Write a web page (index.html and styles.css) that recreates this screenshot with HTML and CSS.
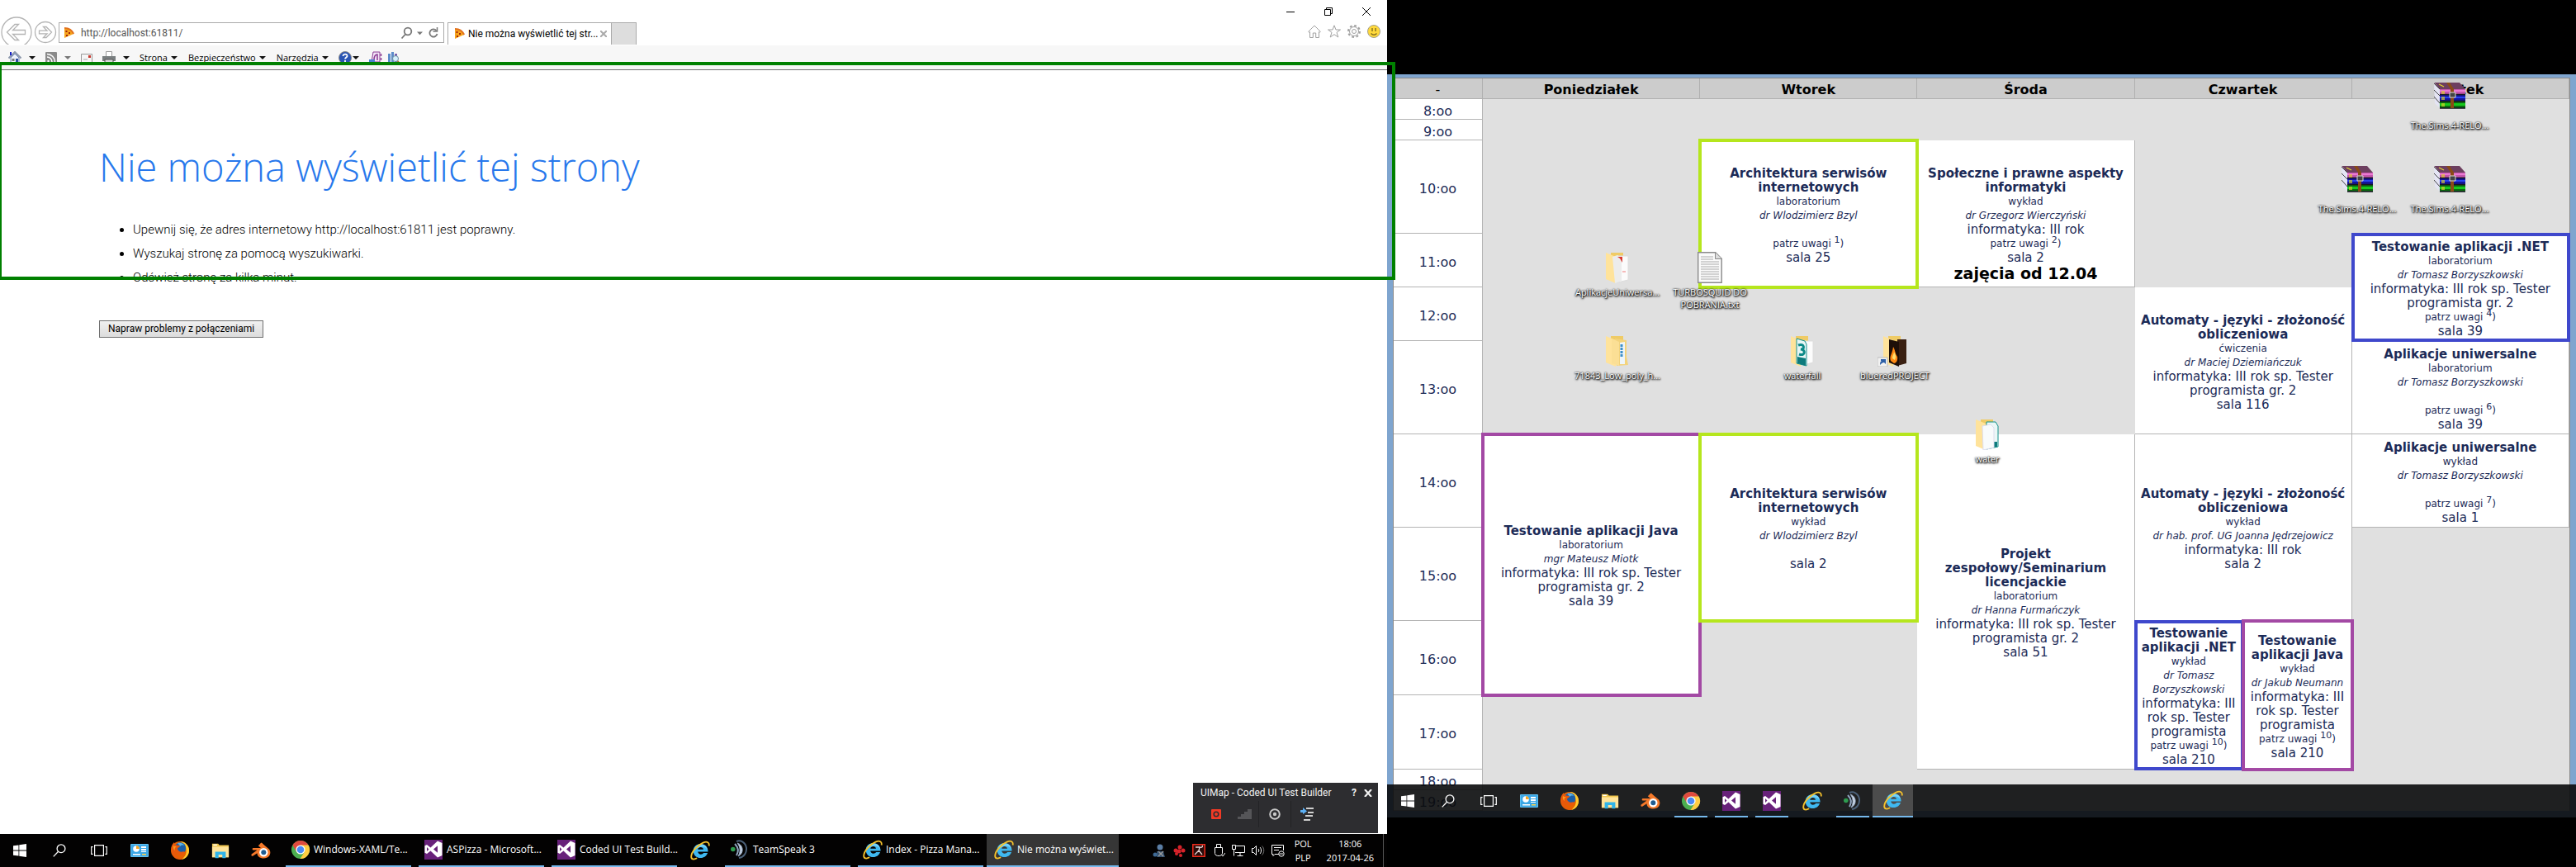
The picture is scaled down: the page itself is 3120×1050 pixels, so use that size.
FILE: index.html
```html
<!DOCTYPE html>
<html lang="pl">
<head>
<meta charset="utf-8">
<title>Nie można wyświetlić tej strony</title>
<link rel="stylesheet" href="styles.css">
</head>
<body>
<svg class="sprite" aria-hidden="true">
  <symbol id="win" viewBox="0 0 16 16"><path fill="#fff" d="M0 2.3 6.5 1.4V7.6H0zM7.3 1.2 16 0V7.6H7.3zM0 8.4H6.5V14.6L0 13.7zM7.3 8.4H16V16L7.3 14.8z"/></symbol>
  <symbol id="search" viewBox="0 0 16 16"><g fill="none" stroke="#fff" stroke-width="1.3"><circle cx="10" cy="5.7" r="4.9"/><path d="M6.6 9.3.7 15.4"/></g></symbol>
  <symbol id="task" viewBox="0 0 20 16"><g fill="none" stroke="#fff" stroke-width="1.2"><path d="M4.6 1.6h10.8v12.8H4.6zM2.6 3.6H.7v8.8h1.9M17.4 3.6h1.9v8.8h-1.9"/></g></symbol>
  <symbol id="panel" viewBox="0 0 22 16"><rect width="22" height="16" rx="1" fill="#5fc0f2"/><rect x="1" y="1" width="20" height="14" fill="#3ba7e6"/><circle cx="7" cy="6" r="3.8" fill="#fff"/><path d="M7 6V2.200a3.800 3.800 0 0 1 3.800 3.800z" fill="#f5a623"/><path d="M13 3h6v2h-6zM13 6h6v2h-6zM13 9h6v1h-6z" fill="#fff"/><path d="M3 12h9v1.500H3z" fill="#fff"/><path d="M14 12h5v1.500h-5z" fill="#ffd24a"/></symbol>
  <symbol id="firefox" viewBox="0 0 24 24"><circle cx="12" cy="12" r="11" fill="#e66000"/><path d="M12 1a11 11 0 0 1 11 11c0 6-4 10-9 11 5-4 7-9 5-14 0-3-3-6-7-8z" fill="#ffcb2f"/><circle cx="12.500" cy="9" r="6.800" fill="#1b5fa8"/><path d="M9 3c3-1 7 0 8.500 3-3-1-5 0-5 1z" fill="#5db5e8"/><path d="M1.500 8C2 5 4 3 5 2c0 2 1 3 3 3.500 1.500.3 3 .4 4 .8 0 2-3 2-3 4 1 3 4 4 7 3 1 0 2 1 1 2-3 4-9 3-11-2 0 5 4 9 10 9-7 2-15-3-14.500-14.300z" fill="#e8590c"/><path d="M4 6c1 1 2 1 4 1-2 1-3 3-2 5C4 11 3.500 8 4 6z" fill="#ff9a1f"/></symbol>
  <symbol id="explorer" viewBox="0 0 24 20"><path d="M1 1h8l1.500 2H23v16H1z" fill="#f0c64d"/><path d="M1 5h22v14H1z" fill="#ffe49a"/><path d="M2.500 2h5v1.500h-5z" fill="#fff"/><path d="M5 20v-8.500h14V20h-4.500v-4.500h-5V20z" fill="#2fb4e9"/></symbol>
  <symbol id="blender" viewBox="0 0 24 20"><path d="M12.500.5 22 8.500c3 4 1 11-6.500 11-5 0-8-3-8-6.300L2.500 16.500c-1.500.8-3-1-1.500-2.200L7.500 9.500H3c-1.800 0-1.800-2.500 0-2.500h9L10 5.200 8.800 4.200z" fill="#f5792a"/><path d="M11 2 13 .8 16 4z" fill="#f5792a"/><circle cx="15.300" cy="12.300" r="5.200" fill="#fff"/><circle cx="15.300" cy="12.300" r="3" fill="#215d91"/></symbol>
  <symbol id="chrome" viewBox="0 0 24 24"><circle cx="12" cy="12" r="11" fill="#4caf50"/><path d="M12 12 2.500 6.500A11 11 0 0 1 21.500 6.500z" fill="#e04a3f"/><path d="M12 6.500h9.600A11 11 0 0 1 11.500 23L17 14.500z" fill="#ffcd42"/><path d="M2.500 6.500 7.200 14.800 12 6.500z" fill="#e04a3f"/><circle cx="12" cy="12" r="5.600" fill="#fff"/><circle cx="12" cy="12" r="4.300" fill="#4b8bf5"/></symbol>
  <symbol id="vs" viewBox="0 0 24 24"><path d="M1 0h22v24H1z" fill="#68217a"/><path fill="#fff" fill-rule="evenodd" d="M17 1.500 22.500 4v15L17 21.500 8.500 13.600 4 17 1.500 15.700V7.300L4 6l4.500 3.400zM17 7.300l-5 4.200 5 4.200zM4 9v5l2.500-2.500z"/></symbol>
  <symbol id="ie" viewBox="0 0 24 24"><path d="M12.600 4c5.400 0 9 3.800 9 9.600H9.200c.3 2 1.700 3.100 3.600 3.100 1.500 0 2.600-.6 3.300-1.600h5c-1.400 3.800-4.400 6-8.400 6-5.200 0-9-3.600-9-8.600C3.700 7.600 7.400 4 12.600 4zm0 4c-1.800 0-3 1-3.400 2.700h6.800C15.600 9 14.400 8 12.600 8z" fill="#3fb8f0"/><path d="M12.600 4.300c4.800 0 8 3 8.600 7.400-3-5-9-6-16.300.2 0-4 3.200-7.600 7.700-7.600z" fill="#9be2ff" opacity=".6"/><path d="M22.600 6.500C23.600 2.400 20.500.4 15.500 2.600 8 5.900 1.500 13.800 1.200 19.200c-.1 3.700 3 4.200 7 2.100" fill="none" stroke="#f6c22c" stroke-width="1.800"/></symbol>
  <symbol id="ts" viewBox="0 0 24 24"><path d="M8 2c5-2 11 1 12 8 .5 6-3 11-9 12" fill="none" stroke="#4b6078" stroke-width="2"/><path d="M9 4c7 2 9 12 1 16 3-5 3-11-1-16z" fill="#cdd8e6" stroke="#8fa4bf"/><path d="M6 5c4 4 5 9 2 14" fill="none" stroke="#8fa4bf" stroke-width="2"/><circle cx="3.800" cy="11.500" r="2.800" fill="#2e9b4f"/></symbol>
  <symbol id="pizza" viewBox="0 0 14 14"><path d="M2 1c5 0 9 2.500 11 7L2 13z" fill="#f6a51c"/><path d="M2 0c6 0 10 3 12 7.500l-1.600 1C10.500 4.500 7 2.300 2 2z" fill="#e2711d"/><path d="M3.500 4h2v2h-2zM7 6h2v2H7zM4 9h2v2H4z" fill="#a3220c"/></symbol>
  <symbol id="rar" viewBox="0 0 38 32"><path d="M0 0h31l7 8H7z" fill="#6d3f5f"/><path d="M0 0l7 8v23L1 25z" fill="#e4e4f4"/><path d="M0 1l7 7M0 9l7 7M0 17l7 8" stroke="#444" stroke-width="1"/><path d="M7 8h31v7H7z" fill="#c455ad"/><path d="M7 9h31v2H7z" fill="#ea7ad2"/><path d="M7 15h31v8H7z" fill="#14149a"/><path d="M7 17h31v2H7z" fill="#2743f0"/><path d="M7 23h31v8H7z" fill="#0b6b10"/><path d="M7 25h31v3H7z" fill="#17c81c"/><path d="M7 14.500h31M7 22.500h31M7 31h31" stroke="#15151f" stroke-width="1.400"/><path d="M15 0h4l5 8v23h-4V8z" fill="#8a4b16"/><path d="M19 12h7v6h-7z" fill="#444" stroke="#ddd"/><path d="M6 2l6 3M10 10v4M12 10v4M10 17v4M12 17v4M10 25v4M12 25v4" stroke="#e2d42c" stroke-width="1.300"/></symbol>
  <symbol id="folder" viewBox="0 0 30 38"><path d="M7 1h15v24L7 30z" fill="#efcb66"/><path d="M1 1l12 5v32L1 33z" fill="#ffe39b"/></symbol>
</svg>

<div class="workspace">
  <section class="monitor monitor-main" aria-label="Internet Explorer">
    <header class="browser-bar">
      <button class="nav-btn back" aria-label="Wstecz"><svg width="40" height="34" viewBox="0 0 40 34" fill="#fff" stroke="#b4b4b4" stroke-width="1.300"><circle cx="20" cy="19" r="18"/><path d="M8.500 19 18 9.500h4.500L15.500 16.500H30.500v5H15.500l7 7H18z"/></svg></button>
      <button class="nav-btn" aria-label="Dalej"><svg width="28" height="34" viewBox="0 0 28 34" fill="#fff" stroke="#b4b4b4" stroke-width="1.300"><circle cx="14" cy="19" r="12.500"/><path d="M21.500 19 15 12.500h-3.500l4.500 4.700H6.500v3.600H16l-4.500 4.700H15z"/></svg></button>
      <div class="address">
        <svg width="14" height="14"><use href="#pizza"/></svg>
        <input type="text" aria-label="Adres" value="http://localhost:61811/">
        <svg width="48" height="16" viewBox="0 0 48 16" fill="none" stroke="#777" stroke-width="1.800"><circle cx="9" cy="6" r="4.300"/><path d="M6 9.500 1.500 14.500"/><path d="M20 6.500h7l-3.500 3.800z" fill="#777" stroke="none"/><path d="M43.500 5a4.600 4.600 0 1 0 1 4"/><path d="M44.500 1v5h-5" stroke-width="1.500"/></svg>
      </div>
      <div class="tab">
        <svg width="14" height="14"><use href="#pizza"/></svg>
        <span class="tab-title">Nie można wyświetlić tej str...</span>
        <button class="bare" aria-label="Zamknij kartę"><svg width="8" height="8" viewBox="0 0 8 8" stroke="#aaa" stroke-width="2"><path d="M0 0l8 8M8 0 0 8"/></svg></button>
      </div>
      <button class="new-tab" aria-label="Nowa karta"></button>
      <div class="window-side">
        <div class="window-controls">
          <button class="bare" aria-label="Minimalizuj"><svg width="10" height="10" viewBox="0 0 10 10" stroke="#000"><path d="M0 5.500h10"/></svg></button>
          <button class="bare" aria-label="Przywróć"><svg width="10" height="10" viewBox="0 0 10 10" stroke="#000" fill="none"><path d="M.5 2.500h7v7h-7zM2.500 2.500v-2h7v7h-2"/></svg></button>
          <button class="bare" aria-label="Zamknij"><svg width="10" height="10" viewBox="0 0 10 10" stroke="#000"><path d="M0 0l10 10M10 0 0 10"/></svg></button>
        </div>
        <div class="window-tools">
          <svg width="16" height="16" viewBox="0 0 16 16" fill="none" stroke="#a0a0a0"><path d="M.7 8.300 8 1l7.300 7.300-1 1-.8-.8v7H9.700V10H6.300v5.500H2.500v-7l-.8.800z"/></svg>
          <svg width="16" height="16" viewBox="0 0 16 16" fill="none" stroke="#a0a0a0"><path d="M8 .8 10 6h5.500L11 9.300l1.800 5.700L8 11.700 3.200 15 5 9.300.5 6H6z"/></svg>
          <svg width="16" height="16" viewBox="0 0 16 16" fill="none" stroke="#a0a0a0"><circle cx="8" cy="8" r="2.500"/><circle cx="8" cy="8" r="5.500"/><circle cx="8" cy="8" r="7" stroke-dasharray="2.750 2.750" stroke-width="2"/></svg>
          <svg width="16" height="16" viewBox="0 0 16 16"><circle cx="8" cy="8" r="7.500" fill="#ffd93b" stroke="#a5a08a"/><path d="M6 4v4M10 4v4M4.500 10.500c2 2.300 5 2.300 7 0" stroke="#8a7420" stroke-width="1.500" fill="none"/></svg>
        </div>
      </div>
    </header>
    <nav class="command-bar" aria-label="Pasek poleceń">
      <button class="cmd cmd-icon" aria-label="Strona główna"><svg width="16" height="16" viewBox="0 0 16 16"><path d="M3 8v7h10V8L8 3z" fill="#eef3fb" stroke="#6d86b8"/><path d="M.5 8.500 8 1l7.500 7.500" fill="none" stroke="#8b97ab" stroke-width="2"/><path d="M2 1h2v4H2z" fill="#1822c8"/><path d="M9 9h3v6H9z" fill="#2c4c9c"/><path d="M4.500 9h3v3h-3z" fill="#777"/></svg><i class="arrow"></i></button>
      <button class="cmd cmd-icon" aria-label="Kanały"><svg width="14" height="14" viewBox="0 0 14 14"><rect width="14" height="14" rx="1" fill="#8a8a8a"/><g fill="none" stroke="#fff" stroke-width="1.500"><path d="M2 6a6 6 0 0 1 6 6M2 2.500A9.500 9.500 0 0 1 11.500 12"/></g><circle cx="3.500" cy="11" r="1.200" fill="#fff"/></svg><i class="arrow dim"></i></button>
      <button class="cmd" aria-label="Poczta"><svg width="14" height="12" viewBox="0 0 14 12"><path d="M.5 1.500h13v10H.5z" fill="#f6f6f6" stroke="#999"/><path d="M9 3h3v3H9z" fill="#c8372d"/><path d="M3 8h5" stroke="#aaa"/></svg></button>
      <button class="cmd cmd-icon" aria-label="Drukuj"><svg width="16" height="16" viewBox="0 0 16 16"><path d="M4.500.5h7v6h-7z" fill="#fff" stroke="#999"/><path d="M0 6h16v6H0z" fill="#7a7f80"/><path d="M3 10h10v5H3z" fill="#d9d9d9" stroke="#555"/></svg><i class="arrow"></i></button>
      <button class="cmd cmd-text">Strona<i class="arrow"></i></button>
      <button class="cmd cmd-text">Bezpieczeństwo<i class="arrow"></i></button>
      <button class="cmd">Narzędzia<i class="arrow"></i></button>
      <button class="cmd cmd-help" aria-label="Pomoc"><svg width="16" height="16" viewBox="0 0 16 16"><circle cx="8" cy="8" r="7.500" fill="#2a55b4" stroke="#888"/><path d="M5.500 6c0-3.500 5.500-3 5 0-.3 1.500-2.500 1.500-2.500 3.500M8 11v2" stroke="#fff" stroke-width="1.800" fill="none"/></svg><i class="arrow"></i></button>
      <button class="cmd cmd-extra" aria-label="OneNote"><svg width="16" height="16" viewBox="0 0 16 16"><path d="M5 1h8v12H3z" fill="#f3e6f7" stroke="#8a3b93"/><path d="M6 11c0-5 1-7 4-7v7" stroke="#8a3b93" stroke-width="1.500" fill="none"/><path d="M14.500 3v3M14.500 8v3" stroke="#8a3b93" stroke-width="1.500"/><path d="M0 10h7v6H0z" fill="#4a7fd0"/></svg></button>
      <button class="cmd cmd-extra" aria-label="Badania"><svg width="16" height="16" viewBox="0 0 16 16"><path d="M1 3h3v12H1zM5 1h3v14H5z" fill="#5b8bc9"/><path d="M9 3h3v12H9z" fill="#7a5fb0"/><circle cx="10" cy="9" r="3.500" fill="#d4f0fb" stroke="#6a8aa0"/><path d="M12.500 12l3 3.500" stroke="#a07030" stroke-width="2"/></svg></button>
    </nav>
    <main class="error-page">
      <h1>Nie można wyświetlić tej strony</h1>
      <ul>
        <li>Upewnij się, że adres internetowy http://localhost:61811 jest poprawny.</li>
        <li>Wyszukaj stronę za pomocą wyszukiwarki.</li>
        <li>Odśwież stronę za kilka minut.</li>
      </ul>
      <button class="fix-btn">Napraw problemy z połączeniami</button>
    </main>

    <aside class="test-builder">
      <div class="builder-title"><span>UIMap - Coded UI Test Builder</span><button class="bare">?</button><button class="bare" aria-label="Zamknij"><svg width="10" height="9" viewBox="0 0 10 9" stroke="#f1f1f1" stroke-width="2.200"><path d="M1 0l8 9M9 0 1 9"/></svg></button></div>
      <div class="builder-tools">
        <button class="bare" aria-label="Nagrywaj"><svg width="12" height="12" viewBox="0 0 12 12"><rect width="12" height="12" rx="1" fill="#f03a25"/><circle cx="6" cy="6" r="2.800" fill="none" stroke="#2d2d30" stroke-width="1.600"/></svg></button>
        <button class="bare" aria-label="Kroki"><svg width="17" height="12" viewBox="0 0 17 12"><path d="M0 12V9h4V6h4V3h4V0h5v12z" fill="#555558"/></svg></button>
        <button class="bare" aria-label="Asercje"><svg width="14" height="14" viewBox="0 0 14 14"><circle cx="7" cy="7" r="5.800" fill="none" stroke="#c8c8c8" stroke-width="2"/><circle cx="7" cy="7" r="2.200" fill="#c8c8c8"/></svg></button>
        <button class="bare" aria-label="Generuj kod"><svg width="16" height="16" viewBox="0 0 16 16"><path d="M7 1h9M9 6h7M6 10h9M4 15h8" stroke="#d0d0d0" stroke-width="2"/><path d="M0 3h3V0l5 4.500L3 8V6H0z" fill="#5cb0f5"/></svg></button>
      </div>
    </aside>

    <footer class="taskbar">
      <button class="tb"><svg width="16" height="16"><use href="#win"/></svg></button>
      <button class="tb"><svg width="16" height="16"><use href="#search"/></svg></button>
      <button class="tb"><svg width="20" height="16"><use href="#task"/></svg></button>
      <button class="tb"><svg width="22" height="16"><use href="#panel"/></svg></button>
      <button class="tb"><svg width="24" height="24"><use href="#firefox"/></svg></button>
      <button class="tb"><svg width="22" height="20"><use href="#explorer"/></svg></button>
      <button class="tb"><svg width="24" height="20"><use href="#blender"/></svg></button>
      <button class="tb task"><svg width="24" height="24"><use href="#chrome"/></svg>Windows-XAML/Te...</button>
      <button class="tb task"><svg width="24" height="24"><use href="#vs"/></svg>ASPizza - Microsoft...</button>
      <button class="tb task"><svg width="24" height="24"><use href="#vs"/></svg>Coded UI Test Build...</button>
      <button class="tb"><svg width="24" height="24"><use href="#ie"/></svg></button>
      <button class="tb task"><svg width="24" height="24"><use href="#ts"/></svg>TeamSpeak 3</button>
      <button class="tb task"><svg width="24" height="24"><use href="#ie"/></svg>Index - Pizza Mana...</button>
      <button class="tb task active"><svg width="24" height="24"><use href="#ie"/></svg>Nie można wyświet...</button>
      <div class="tray">
        <svg width="16" height="16" viewBox="0 0 16 16"><circle cx="9" cy="4" r="3.500" fill="#5b7ea5"/><path d="M5 16V9h8l2 7z" fill="#33506e"/><circle cx="3" cy="13" r="2.500" fill="#3f6a95"/><path d="M7 9l6 6M13 9l-6 6" stroke="#999" stroke-width="1.500"/></svg>
        <svg width="16" height="16" viewBox="0 0 16 16" fill="#d8232a"><circle cx="9" cy="4" r="2.500"/><circle cx="4" cy="8" r="2.500"/><circle cx="8" cy="9" r="2.500"/><circle cx="13" cy="8" r="2.500"/><circle cx="5" cy="12" r="2"/><circle cx="10" cy="14" r="2"/></svg>
        <svg width="16" height="16" viewBox="0 0 16 16"><path d="M.8.800h14.400v14.400H.8z" fill="#2a0c0a" stroke="#ef2b1c" stroke-width="1.500"/><path d="M4 4h5l-1 4 4 5M8 8l-5 5M9 4c3 1 4-1 3-2" stroke="#e8d8d8" stroke-width="1.300" fill="none"/></svg>
        <svg width="16" height="16" viewBox="0 0 16 16" fill="none" stroke="#fff"><path d="M5.500.5h5v4h-5zM3.500 4.500h9v7c0 4-9 4-9 0z"/><path d="M11 13l2 2 3-4"/></svg>
        <svg width="16" height="16" viewBox="0 0 16 16" fill="none" stroke="#fff"><path d="M4 2.500h11.500v8H4M10 10.500V14M6.500 14.500h7M.5 1.500h4v5h-4zM2.500 6.500v8"/></svg>
        <svg width="16" height="16" viewBox="0 0 16 16" fill="none" stroke="#fff"><path d="M.5 5.500h2l3-3v11l-3-3h-2zM8 6c1 1 1 3 0 4M10 4c2 2 2 6 0 8"/><path d="M12.500 2.500c3 3 3 8 0 11" stroke="#777"/></svg>
        <svg width="16" height="16" viewBox="0 0 16 16" fill="none" stroke="#fff"><path d="M9 12.500H4l-2 2v-2H.500V1.500h14V8M3 4.500h9M3 7.500h6"/><circle cx="12" cy="12" r="3.200"/><path d="M10 12h4"/></svg>
        <div class="tray-text lang">POL<br>PLP</div>
        <div class="tray-text clock">18:06<br>2017-04-26</div>
      </div>
    </footer>
    <div class="highlight"></div>
  </section>

  <section class="monitor monitor-side" aria-label="Pulpit">
    <div class="desktop">
      <div class="wallpaper">
        <table class="timetable">
          <colgroup><col class="c-time"><col class="c-day"><col class="c-day"><col class="c-day"><col class="c-half"><col class="c-half"><col class="c-day"></colgroup>
          <thead><tr class="h25"><th>-</th><th>Poniedziałek</th><th>Wtorek</th><th>Środa</th><th colspan="2">Czwartek</th><th>Piątek</th></tr></thead>
          <tbody>
            <tr class="h25"><td class="hour">8:oo</td><td rowspan="6"></td><td rowspan="2"></td><td rowspan="2"></td><td rowspan="4" colspan="2"></td><td rowspan="3"></td></tr>
            <tr class="h25"><td class="hour">9:oo</td></tr>
            <tr class="h113"><td class="hour">10:oo</td>
              <td rowspan="2" class="slot lime"><b>Architektura serwisów internetowych</b><small>laboratorium</small><em>dr Wlodzimierz Bzyl</em><p>&nbsp;</p><small>patrz uwagi <sup>1</sup>)</small><p>sala 25</p></td>
              <td rowspan="2" class="slot"><b>Społeczne i prawne aspekty informatyki</b><small>wykład</small><em>dr Grzegorz Wierczyński</em><p>informatyka: III rok</p><small>patrz uwagi <sup>2</sup>)</small><p>sala 2</p><strong>zajęcia od 12.04</strong></td></tr>
            <tr class="h65"><td class="hour">11:oo</td>
              <td rowspan="2" class="slot blue"><b>Testowanie aplikacji .NET</b><small>laboratorium</small><em>dr Tomasz Borzyszkowski</em><p>informatyka: III rok sp. Tester programista gr. 2</p><small>patrz uwagi <sup>4</sup>)</small><p>sala 39</p></td></tr>
            <tr class="h65"><td class="hour">12:oo</td><td rowspan="2"></td><td rowspan="2"></td>
              <td rowspan="2" colspan="2" class="slot"><b>Automaty - języki - złożoność obliczeniowa</b><small>ćwiczenia</small><em>dr Maciej Dziemiańczuk</em><p>informatyka: III rok sp. Tester programista gr. 2</p><p>sala 116</p></td></tr>
            <tr class="h113"><td class="hour">13:oo</td>
              <td class="slot"><b>Aplikacje uniwersalne</b><small>laboratorium</small><em>dr Tomasz Borzyszkowski</em><p>&nbsp;</p><small>patrz uwagi <sup>6</sup>)</small><p>sala 39</p></td></tr>
            <tr class="h113"><td class="hour">14:oo</td>
              <td rowspan="3" class="slot purple"><b>Testowanie aplikacji Java</b><small>laboratorium</small><em>mgr Mateusz Miotk</em><p>informatyka: III rok sp. Tester programista gr. 2</p><p>sala 39</p></td>
              <td rowspan="2" class="slot lime"><b>Architektura serwisów internetowych</b><small>wykład</small><em>dr Wlodzimierz Bzyl</em><p>&nbsp;</p><p>sala 2</p></td>
              <td rowspan="4" class="slot"><b>Projekt<br>zespołowy/Seminarium licencjackie</b><small>laboratorium</small><em>dr Hanna Furmańczyk</em><p>informatyka: III rok sp. Tester programista gr. 2</p><p>sala 51</p></td>
              <td rowspan="2" colspan="2" class="slot"><b>Automaty - języki - złożoność obliczeniowa</b><small>wykład</small><em>dr hab. prof. UG Joanna Jędrzejowicz</em><p>informatyka: III rok</p><p>sala 2</p></td>
              <td class="slot"><b>Aplikacje uniwersalne</b><small>wykład</small><em>dr Tomasz Borzyszkowski</em><p>&nbsp;</p><small>patrz uwagi <sup>7</sup>)</small><p>sala 1</p></td></tr>
            <tr class="h113"><td class="hour">15:oo</td><td rowspan="5"></td></tr>
            <tr class="h90"><td class="hour">16:oo</td><td rowspan="4"></td>
              <td rowspan="2" class="slot blue"><b>Testowanie aplikacji .NET</b><small>wykład</small><em>dr Tomasz Borzyszkowski</em><p>informatyka: III rok sp. Tester programista</p><small>patrz uwagi <sup>10</sup>)</small><p>sala 210</p></td>
              <td rowspan="2" class="slot purple"><b>Testowanie aplikacji Java</b><small>wykład</small><em>dr Jakub Neumann</em><p>informatyka: III rok sp. Tester programista</p><small>patrz uwagi <sup>10</sup>)</small><p>sala 210</p></td></tr>
            <tr class="h90"><td class="hour">17:oo</td><td rowspan="3"></td></tr>
            <tr class="h25"><td class="hour">18:oo</td><td rowspan="2"></td><td rowspan="2" colspan="2"></td></tr>
            <tr class="h25"><td class="hour">19:oo</td></tr>
          </tbody>
        </table>
      </div>
      <div class="shortcuts">
        <a href="#" class="shortcut c10 r1"><svg class="archive" width="38" height="32"><use href="#rar"/></svg><span>The.Sims.4-RELO...</span></a>
        <a href="#" class="shortcut c9 r2"><svg class="archive" width="38" height="32"><use href="#rar"/></svg><span>The.Sims.4-RELO...</span></a>
        <a href="#" class="shortcut c10 r2"><svg class="archive" width="38" height="32"><use href="#rar"/></svg><span>The.Sims.4-RELO...</span></a>
        <a href="#" class="shortcut c1 r3"><svg width="30" height="38" viewBox="0 0 30 38"><use href="#folder" width="30" height="38"/><path d="M15 5h13v29l-13 3z" fill="#fbfbfb" stroke="#ddd"/><path d="M9 6l6-2 5 3v28l-8 3z" fill="#ececec"/><path d="M15 6h6v7l-3-5z" fill="#d93a30"/><path d="M21 24h4" stroke="#e77"/></svg><span>AplikacjeUniwersa...</span></a>
        <a href="#" class="shortcut c2 r3"><svg width="30" height="38" viewBox="0 0 30 38"><path d="M.7.700h21l7.500 7.500v29H.7z" fill="#fafafa" stroke="#8a8a8a" stroke-width="1.400"/><path d="M21.500.7v7.800h7.800" fill="#ddd" stroke="#8a8a8a"/><path d="M4 6h15M4 9h15M4 12h22M4 15h22M4 18h22M4 21h22M4 24h22M4 27h22M4 30h22M4 33h22" stroke="#aaa"/></svg><span>TURBOSQUID DO POBRANIA.txt</span></a>
        <a href="#" class="shortcut c1 r4"><svg width="30" height="38" viewBox="0 0 30 38"><use href="#folder" width="30" height="38"/><path d="M12 4l14 2v20l2 10-14 1z" fill="#f3d37c"/><path d="M18 9l6-1v27h-6z" fill="#eef5fa"/><path d="M20 11v15" stroke="#3d8fc9" stroke-width="3" stroke-dasharray="3 1"/><path d="M8 4l9 4v29l-9-3z" fill="#fbdf95"/></svg><span>71843_Low_poly_h...</span></a>
        <a href="#" class="shortcut c3 r4"><svg width="30" height="38" viewBox="0 0 30 38"><use href="#folder" width="30" height="38"/><path d="M17 7h11v26l-11 3z" fill="#fcfcfc" stroke="#ddd"/><path d="M8 4l10 3 2 4v26L8 34z" fill="#e8f6f5" stroke="#12908c"/><path d="M10 12c8-3 8 6 3 5 6 0 6 9-2 6" fill="none" stroke="#0d8a88" stroke-width="3"/><path d="M9 26l10 2v9L9 34z" fill="#0d7a7c"/></svg><span>waterfall</span></a>
        <a href="#" class="shortcut c4 r4"><svg width="42" height="38" viewBox="-6 0 42 38"><use href="#folder" width="30" height="38"/><path d="M18 5h11v29l-11 3z" fill="#3a2012"/><path d="M8 5l12 3v30L8 33z" fill="#1d0f08"/><path d="M10 31c-2-6 2-8 3-17 3 5 2 8 5 12 1 5-2 8-4 8z" fill="#ff8a12"/><path d="M12 28c0-4 2-5 2-8 2 4 3 6 1 10z" fill="#ffe070"/><path d="M-6 27H6v11H-6z" fill="#f2f2f2" stroke="#bbb"/><path d="M-3 36c0-4 1-5 3-5h-2v-2h6v6l-2-2c-2 0-3 1-5 3z" fill="#2d5fa6"/></svg><span>blueredPROJECT</span></a>
        <a href="#" class="shortcut c5 r5"><svg width="30" height="38" viewBox="0 0 30 38"><use href="#folder" width="30" height="38"/><path d="M14 4h11l3 5v25l-14 3z" fill="#eaf7f6" stroke="#12908c"/><path d="M22 28h5v6l-5 1z" fill="#0d7a7c"/><path d="M9 9l10-2 4 4v24l-13 3z" fill="#f8fbfc" stroke="#dde"/></svg><span>water</span></a>
      </div>
      <footer class="taskbar taskbar-glass">
        <button class="tb"><svg width="16" height="16"><use href="#win"/></svg></button>
        <button class="tb"><svg width="16" height="16"><use href="#search"/></svg></button>
        <button class="tb"><svg width="20" height="16"><use href="#task"/></svg></button>
        <button class="tb"><svg width="22" height="16"><use href="#panel"/></svg></button>
        <button class="tb"><svg width="24" height="24"><use href="#firefox"/></svg></button>
        <button class="tb"><svg width="22" height="20"><use href="#explorer"/></svg></button>
        <button class="tb"><svg width="24" height="20"><use href="#blender"/></svg></button>
        <button class="tb running"><svg width="24" height="24"><use href="#chrome"/></svg></button>
        <button class="tb running"><svg width="24" height="24"><use href="#vs"/></svg></button>
        <button class="tb running"><svg width="24" height="24"><use href="#vs"/></svg></button>
        <button class="tb"><svg width="24" height="24"><use href="#ie"/></svg></button>
        <button class="tb running"><svg width="24" height="24"><use href="#ts"/></svg></button>
        <button class="tb active"><svg width="24" height="24"><use href="#ie"/></svg></button>
      </footer>
    </div>
  </section>
</div>
</body>
</html>
```
FILE: styles.css
```css
* { box-sizing: border-box; }

body {
  margin: 0;
  background: #000;
  color: #000;
  font: 12px/16px Roboto, "Open Sans", sans-serif;
}

button {
  margin: 0;
  padding: 0;
  border: 0;
  background: none;
  color: inherit;
  font: inherit;
}

svg { display: block; flex: none; }

.sprite { position: absolute; width: 0; height: 0; }

.workspace {
  display: grid;
  grid-template-columns: 1680fr 1440fr;
  min-height: 100vh;
  overflow: hidden;
}

.monitor { min-width: 0; }

.monitor-main {
  position: relative;
  z-index: 1;
  display: flex;
  flex-direction: column;
  background: #fff;
}

/* Browser chrome */
.browser-bar {
  display: flex;
  align-items: flex-end;
  height: 55px;
  padding-bottom: 1px;
}

.nav-btn { flex: none; }
.nav-btn + .nav-btn { margin: 0 2px 0 1px; }

.address {
  display: flex;
  align-items: center;
  gap: 8px;
  flex: 0 1 467px;
  height: 25px;
  margin: 0 4px 2px 0;
  padding: 0 4px;
  border: 1px solid #aaa;
}

.address input {
  flex: 1;
  min-width: 0;
  padding: 0;
  border: 0;
  outline: 0;
  background: none;
  color: #555;
  font: inherit;
}

.tab {
  display: flex;
  align-items: center;
  flex: none;
  width: 199px;
  height: 27px;
  padding: 0 5px 0 6px;
  border: 1px solid #aaa;
  border-bottom: 0;
}

.tab-title { flex: 1; margin-left: 4px; white-space: nowrap; }

.new-tab {
  width: 30px;
  height: 27px;
  border: 1px solid #aaa;
  border-width: 1px 1px 0 0;
  background: #ddd;
}

.window-side {
  display: flex;
  flex-direction: column;
  gap: 11px;
  margin-left: auto;
  padding: 0 8px 8px 0;
}

.window-controls { display: flex; gap: 36px; padding-right: 12px; justify-content: flex-end; }
.window-tools { display: flex; gap: 8px; justify-content: flex-end; }

.command-bar {
  display: flex;
  align-items: flex-start;
  height: 30px;
  padding: 6px 10px 0;
  border-bottom: 1px solid #6f6f6f;
  background: #f7f7f7;
  font: 11px/18px "Open Sans", sans-serif;
}

.cmd { display: flex; align-items: center; gap: 4px; height: 18px; margin-right: 12px; }
.cmd-icon { gap: 9px; }
.cmd-text { margin-right: 13px; }
.cmd-help { gap: 1px; }
.cmd-extra { margin-right: 6px; }

.arrow { border: 4px solid transparent; border-top-color: #111; border-bottom: 0; }
.arrow.dim { border-top-color: #777; }

/* Error page */
.error-page { flex: 1; padding: 85px 120px 0; }

.error-page h1 {
  margin: 0;
  color: #2778ec;
  font: 300 47px/64px "Open Sans", sans-serif;
}

.error-page ul {
  margin: 30px 0 37px;
  padding-left: 41px;
  font: 300 15px/29px Roboto, sans-serif;
}

.fix-btn {
  height: 21px;
  padding: 0 10px;
  border: 1px solid #707070;
  background: linear-gradient(#f0f0f0, #dcdcdc);
  line-height: 19px;
}

.highlight {
  position: absolute;
  top: 75px;
  left: -2px;
  right: -10px;
  height: 264px;
  border: 4px solid #008000;
  pointer-events: none;
}

/* Floating recorder window */
.test-builder {
  position: absolute;
  right: 11px;
  bottom: 41px;
  width: 224px;
  height: 61px;
  background: #2d2d30;
  color: #f1f1f1;
}

.builder-title { display: flex; align-items: center; gap: 9px; padding: 4px 7px 0 9px; }
.builder-title span { flex: 1; }
.builder-title button { font-weight: 700; }

.builder-tools {
  display: grid;
  grid-template-columns: 34px 34px 39px 38px;
  margin: 2px 0 0 11px;
}
.builder-tools button { display: flex; align-items: center; justify-content: center; height: 32px; }
.builder-tools button + button + button { border-left: 1px solid #232325; }

/* Taskbar */
.taskbar {
  display: flex;
  height: 40px;
  background: #030202;
  color: #fff;
}

.tb {
  display: flex;
  align-items: center;
  justify-content: center;
  flex: none;
  width: 49px;
  height: 40px;
}

.monitor-main > .taskbar .tb:nth-child(-n+3) { width: 48px; }

.task {
  gap: 4px;
  justify-content: flex-start;
  width: 152px;
  margin: 0 3px 0 6px;
  padding-left: 6px;
  border-bottom: 2px solid #76b9ed;
  font: 12px/16px "Open Sans", sans-serif;
  white-space: nowrap;
}

.task.active { width: 160px; margin-left: 1px; padding-left: 9px; background: #363636; }

.tray {
  display: flex;
  align-items: center;
  gap: 8px;
  margin-left: auto;
  margin-right: 4px;
  padding-right: 11px;
  border-right: 1px solid #555;
}

.tray-text { text-align: center; font: 11px/17px "Open Sans", sans-serif; }
.lang { margin: 0 10px 0 4px; }

/* Second monitor */
.monitor-side { padding: 90px 0 60px; background: #000; }

.desktop {
  display: grid;
  grid-template-rows: 1fr 40px;
  height: 100%;
  background: #7fa5cf;
}

.wallpaper { grid-area: 1 / 1 / 3 / 2; padding: 4px 7px 0; }

.timetable {
  width: 100%;
  table-layout: fixed;
  border-collapse: separate;
  border-spacing: 0;
  border: 1px solid #8a8a8a;
  border-bottom: 0;
  background: #e0e0e0;
  color: #1c2b57;
  font: 15px/17px "DejaVu Sans", sans-serif;
  text-align: center;
}

.c-time { width: 108px; }
.c-day { width: 18.5%; }
.c-half { width: 9.25%; }

.h25 { height: 25px; }
.h65 { height: 65px; }
.h90 { height: 90px; }
.h113 { height: 113px; }

.timetable th {
  padding: 2px 0 0;
  border: solid #b0b0b0;
  border-width: 0 1px 1px 0;
  background: #ccc;
  color: #000;
  font-size: 16px;
}
.timetable th:first-child { font-weight: 400; }

.timetable td { padding: 0; }

.timetable .hour,
.timetable .slot {
  border: solid #b4b4b4;
  border-width: 0 1px 1px 0;
  background: #fff;
}
.timetable .hour { padding-top: 4px; font-size: 16px; }
.timetable .slot { padding: 5px 4px 0; }

.slot > * { display: block; margin: 0; }
.slot small, .slot em { font-size: 12px; }
.slot sup { font-size: 11px; line-height: 0; }
.slot strong { margin-bottom: -20px; color: #000; font-size: 19px; line-height: 20px; }

.lime { outline: 4px solid #b5e61d; outline-offset: -2px; }
.blue { outline: 4px solid #3f48cc; outline-offset: -3px; }
.purple { outline: 4px solid #a349a4; outline-offset: -2px; }

.shortcuts {
  grid-area: 1 / 1 / 3 / 2;
  display: grid;
  grid-template-columns: repeat(10, 112px);
  grid-template-rows: repeat(5, 101px);
  padding: 9px 0 0 223px;
}

.shortcut {
  display: flex;
  flex-direction: column;
  align-items: center;
  padding: 1px 8px 0;
  color: #fff;
  font: 11px/15px "Open Sans", sans-serif;
  text-align: center;
  text-decoration: none;
  text-shadow: 1px 1px 2px #000, 0 0 2px #000, 0 1px 3px #000;
}
.shortcut svg { margin: 3px 0; }
.shortcut .archive { margin: 0 0 12px; }

.c1 { grid-column: 1; }
.c2 { grid-column: 2; }
.c3 { grid-column: 3; }
.c4 { grid-column: 4; }
.c5 { grid-column: 5; }
.c9 { grid-column: 9; }
.c10 { grid-column: 10; }
.r1 { grid-row: 1; }
.r2 { grid-row: 2; }
.r3 { grid-row: 3; }
.r4 { grid-row: 4; }
.r5 { grid-row: 5; }

.taskbar-glass { grid-area: 2 / 1 / 3 / 2; background: rgba(10, 11, 12, .9); }
.running { background: linear-gradient(#76b9ed, #76b9ed) center bottom / 40px 2px no-repeat; }
.taskbar-glass .active { border-bottom: 2px solid #76b9ed; background: #4c4c4c; }
```
